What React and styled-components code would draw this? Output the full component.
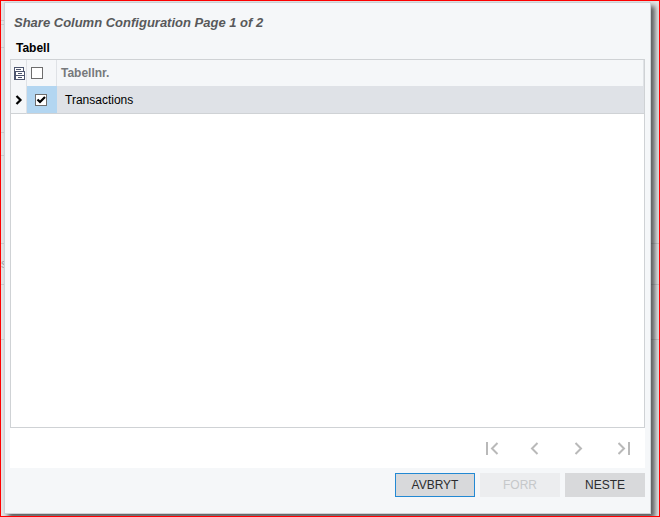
import { useState } from 'react';
import styled, { createGlobalStyle } from 'styled-components';

const backdropRows = [
    { height: 20, short: true },
    { height: 4, short: true },
    { height: 23, short: true },
    { height: 85, short: true },
    { height: 23, short: true },
    { height: 88 },
    { height: 41, label: 's' },
    { height: 55 },
];

function App() {
    const [rows, setRows] = useState([{ id: 1, name: 'Transactions', checked: true }]);
    const [all, setAll] = useState(false);

    function toggleRow(id) {
        setRows(rows.map((row) => (row.id === id ? { ...row, checked: !row.checked } : row)));
    }

    function toggleAll() {
        setRows(rows.map((row) => ({ ...row, checked: !all })));
        setAll(!all);
    }

    return (
        <>
            <GlobalStyle />
            <PageContainer>
                <Backdrop aria-hidden="true">
                    {backdropRows.map((row, i) => (
                        <BackdropRow key={i} $height={row.height} $short={row.short}>{row.label}</BackdropRow>
                    ))}
                </Backdrop>

                <Dialog role="dialog" aria-labelledby="dialog-title">
                    <Title id="dialog-title">Share Column Configuration Page 1 of 2</Title>
                    <Label id="table-label">Tabell</Label>

                    <GridPanel>
                        <GridBox>
                            <Table aria-labelledby="table-label">
                                <thead>
                                    <tr>
                                        <HeadCell $width={16}><FilesIcon /></HeadCell>
                                        <HeadCell $width={30}>
                                            <CheckBox $head type="checkbox" aria-label="Velg alle" checked={all} onChange={toggleAll} />
                                        </HeadCell>
                                        <HeadCell $text>Tabellnr.</HeadCell>
                                    </tr>
                                </thead>
                                <tbody>
                                    {rows.map((row) => (
                                        <tr key={row.id}>
                                            <Cell><RowArrow /></Cell>
                                            <Cell $color="#b3d6f1">
                                                <CheckBox type="checkbox" aria-label={row.name} checked={row.checked} onChange={() => toggleRow(row.id)} />
                                            </Cell>
                                            <Cell $color="#dfe2e7" $text>{row.name}</Cell>
                                        </tr>
                                    ))}
                                </tbody>
                            </Table>
                        </GridBox>

                        <Pager>
                            <PagerButton aria-label="Første"><PagerIcon d="M1 0V13M11.5 1L6 6.5L11.5 12" /></PagerButton>
                            <PagerButton aria-label="Forrige"><PagerIcon d="M7.5 1L2 6.5L7.5 12" /></PagerButton>
                            <PagerButton aria-label="Neste side"><PagerIcon d="M1.5 1L7 6.5L1.5 12" /></PagerButton>
                            <PagerButton aria-label="Siste"><PagerIcon d="M0.5 1L6 6.5L0.5 12M11 0V13" /></PagerButton>
                        </Pager>
                    </GridPanel>

                    <Actions>
                        <ActionButton $active>AVBRYT</ActionButton>
                        <ActionButton disabled>FORR</ActionButton>
                        <ActionButton>NESTE</ActionButton>
                    </Actions>
                </Dialog>
            </PageContainer>
        </>
    )
}

function FilesIcon() {
    return (
        <svg width="11" height="13" viewBox="0 0 11 13" shapeRendering="crispEdges" fill="#fff" stroke="#4d566f">
            <path d="M0.5 0.5H9.5V4.5H0.5Z" />
            <path d="M1.5 4.5H10.5V8.5H1.5Z" />
            <path d="M1.5 8.5H10.5V12.5H1.5Z" />
            <path d="M2 2.5H7M4 6.5H8M4 10.5H8M0.5 4V12.5" fill="none" />
        </svg>
    )
}

function RowArrow() {
    return (
        <svg width="12" height="10" viewBox="0 0 12 10" fill="none" stroke="#000" strokeWidth="2.2">
            <path d="M3.5 1L7.5 5L3.5 9" />
        </svg>
    )
}

function PagerIcon({ d }) {
    return (
        <svg width="14" height="13" viewBox="0 0 14 13" fill="none" stroke="#b9b9b9" strokeWidth="2">
            <path d={d} />
        </svg>
    )
}

export default App;

const GlobalStyle = createGlobalStyle`
  * {
    box-sizing: border-box;
  }
  body {
    margin: 0;
    font-family: 'Liberation Sans', Arial, sans-serif;
    font-size: 12px;
    color: #000;
  }
`;

const PageContainer = styled.div`
  position: relative;
  min-height: 100vh;
  display: flex;
  padding: 1px 8px 2px 3px;
  border: 1px solid #f00;
  background-color: #e3e4e5;
  overflow: hidden;
`;

const Backdrop = styled.div`
  position: absolute;
  inset: 0;
`;

const BackdropRow = styled.div`
  width: ${({ $short }) => ($short ? '50%' : '100%')};
  height: ${({ $height }) => $height}px;
  display: flex;
  align-items: center;
  border-bottom: 1px solid #cbcccd;
  color: #a5a6a8;
`;

const Dialog = styled.main`
  position: relative;
  flex: 1;
  min-width: 0;
  display: flex;
  flex-direction: column;
  padding: 12px 5px 16px;
  border: 1px solid #cdd1d5;
  background-color: #f5f7f9;
  box-shadow: 4px 4px 5px rgba(0, 0, 0, 0.6);
`;

const Title = styled.h1`
  margin: 0;
  padding-left: 4px;
  font-size: 13px;
  font-style: italic;
  line-height: 16px;
  color: #58595b;
`;

const Label = styled.h2`
  margin: 0;
  padding: 9px 0 3px 6px;
  font-size: 12px;
  line-height: 16px;
`;

const GridPanel = styled.section`
  flex: 1;
  display: flex;
  flex-direction: column;
  background-color: #fff;
`;

const GridBox = styled.div`
  flex: 1;
  border: 1px solid #cfd2d5;
`;

const Table = styled.table`
  width: 100%;
  table-layout: fixed;
  border-collapse: separate;
  border-spacing: 0;
`;

const HeadCell = styled.th`
  width: ${({ $width }) => ($width ? `${$width}px` : 'auto')};
  height: 26px;
  padding: 0 0 0 ${({ $text }) => ($text ? 4 : 3)}px;
  border-right: 1px solid #dfe2e6;
  background-color: #f5f7f9;
  color: #77797c;
  text-align: left;
  svg {
    display: block;
  }
`;

const Cell = styled.td`
  height: 28px;
  padding: 0 0 0 ${({ $text }) => ($text ? 8 : 2)}px;
  border-bottom: 1px solid #cfd2d5;
  border-right: ${({ $color }) => ($color ? 'none' : '1px solid #dfe2e6')};
  background-color: ${({ $color }) => $color || '#f5f7f9'};
  svg {
    display: block;
  }
`;

const CheckBox = styled.input`
  appearance: none;
  display: block;
  width: 12px;
  height: 12px;
  margin: 0 0 0 ${({ $head }) => ($head ? 1 : 6)}px;
  border: 1px solid #6d6d6d;
  background-color: #fff;
  &:checked {
    background-image: url("data:image/svg+xml,%3Csvg xmlns='http://www.w3.org/2000/svg' viewBox='0 0 10 10'%3E%3Cpath d='M1.5 4.5L4 7L9 2' fill='none' stroke='%23000' stroke-width='2.2'/%3E%3C/svg%3E");
  }
`;

const Pager = styled.nav`
  height: 40px;
  display: flex;
  justify-content: flex-end;
  align-items: center;
  gap: 20px;
  padding-right: 8px;
`;

const PagerButton = styled.button`
  width: 24px;
  height: 24px;
  display: flex;
  justify-content: center;
  align-items: center;
  padding: 0;
  border: none;
  background: none;
`;

const Actions = styled.footer`
  display: flex;
  justify-content: flex-end;
  gap: 5px;
  padding-top: 5px;
`;

const ActionButton = styled.button`
  width: 80px;
  height: 24px;
  padding: 0;
  border: ${({ $active }) => ($active ? '1px solid #2389d3' : 'none')};
  background-color: #d8d9db;
  color: #2b2c2e;
  font-family: inherit;
  font-size: 12px;
  &:disabled {
    background-color: #ecedef;
    color: #c6c8ca;
  }
`;
